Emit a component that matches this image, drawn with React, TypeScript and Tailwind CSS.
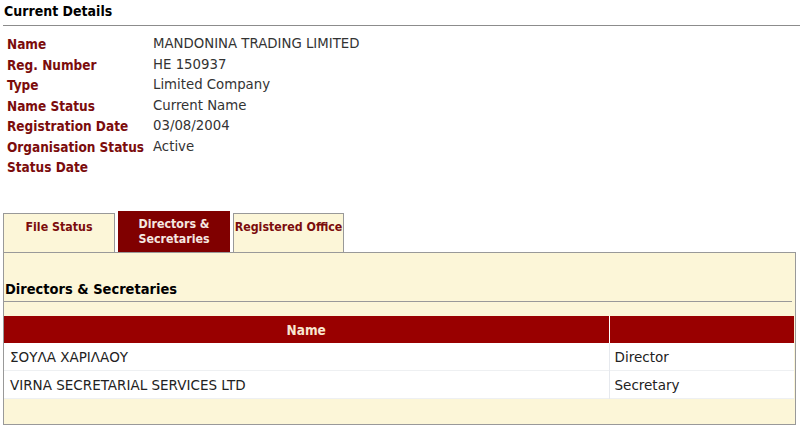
const details: [string, string][] = [
  ["Name", "MANDONINA TRADING LIMITED"],
  ["Reg. Number", "HE 150937"],
  ["Type", "Limited Company"],
  ["Name Status", "Current Name"],
  ["Registration Date", "03/08/2004"],
  ["Organisation Status", "Active"],
  ["Status Date", ""],
];

const officers = [
  { name: "ΣΟΥΛΑ ΧΑΡΙΛΑΟΥ", role: "Director" },
  { name: "VIRNA SECRETARIAL SERVICES LTD", role: "Secretary" },
];

const bold = "font-bold font-['DejaVu_Sans_Condensed','DejaVu_Sans',sans-serif] whitespace-nowrap";

export default function App() {
  return (
    <div className="w-[800px] h-[433px] bg-white overflow-hidden font-['DejaVu_Sans',Verdana,sans-serif] text-[13px] text-[#333]">
      <div className="ml-[3px] border-b border-[#8c8c8c] pl-[1px] pt-[3px] h-[26px]">
        <h2 className={`${bold} text-[14px] leading-[16px] text-black`}>Current Details</h2>
      </div>

      <div className="pl-[7px] pt-[8px]">
        {details.map(([label, value]) => (
          <div key={label} className="flex h-[20.5px] items-center">
            <div className={`w-[146px] ${bold} text-[13.5px] text-[#7b0c0c]`}>{label}</div>
            <div className="text-[13.3px]">{value}</div>
          </div>
        ))}
      </div>

      <div className={`flex items-end gap-[3px] pl-[3px] mt-[33px] h-[41px] text-[12.3px] leading-[15px] ${bold}`}>
        <div className="w-[112px] h-[39px] pt-[6px] bg-[#fcf6d8] border border-b-0 border-[#999] text-center text-[#7b0c0c]">
          File Status
        </div>
        <div className="w-[112px] h-[41px] pt-[6px] bg-[#800000] text-center text-[#f5e8e0]">
          Directors &amp;<br />Secretaries
        </div>
        <div className="w-[111px] h-[39px] pt-[6px] bg-[#fcf6d8] border border-b-0 border-[#999] text-center text-[#7b0c0c]">
          Registered Office
        </div>
      </div>

      <div className="ml-[3px] w-[793px] h-[173px] bg-[#fcf6d8] border border-[#999] flex flex-col">
        <div className="mt-[28px] border-b border-[#999] pb-[3px] pl-[1px] mr-[3px]">
          <h3 className={`${bold} text-[14.5px] leading-[17px] text-black`}>Directors &amp; Secretaries</h3>
        </div>
        <table className="mt-[14px] w-[790px] border-collapse text-[13.5px]">
          <thead>
            <tr className="bg-[#990000] h-[27px]">
              <th className={`w-[605px] pt-[2px] text-[#f8e6d0] ${bold} text-[13.5px] border-r border-white`}>Name</th>
              <th></th>
            </tr>
          </thead>
          <tbody>
            {officers.map((o) => (
              <tr key={o.name} className="bg-white h-[28px] border-b border-[#eef0f2]">
                <td className="pl-[6px] pt-[2px] text-[#222]">{o.name}</td>
                <td className="pl-[5px] pt-[2px] text-[#222] border-l border-[#e6e9ee]">{o.role}</td>
              </tr>
            ))}
          </tbody>
        </table>
      </div>
    </div>
  );
}
